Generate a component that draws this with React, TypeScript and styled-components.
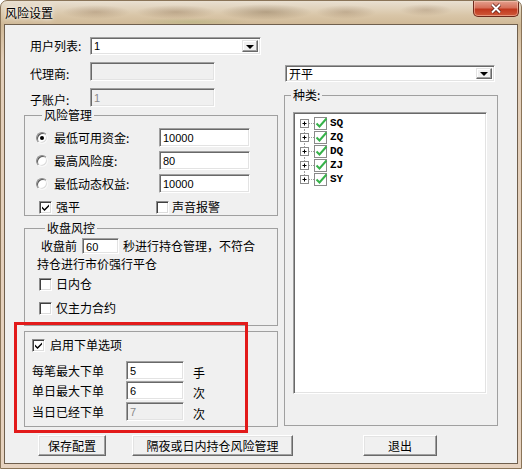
import React from 'react';
import styled, { createGlobalStyle } from 'styled-components';

const GlobalStyle = createGlobalStyle`
  html, body {
    margin: 0;
    padding: 0;
    background: #fff;
  }
  body {
    font-family: "Noto Sans CJK SC", "Liberation Sans", sans-serif;
    font-size: 12px;
    color: #000;
  }
`;

// window frame
const Window = styled.div`
  width: 522px;
  height: 469px;
  box-sizing: border-box;
  border: 1px solid #8a7458;
  border-radius: 7px 7px 0 0;
  padding: 0 3px 4px;
  display: flex;
  flex-direction: column;
  overflow: hidden;
  background:
    radial-gradient(ellipse 34px 7px at 95px 11px, rgba(140, 110, 80, 0.35), transparent),
    radial-gradient(ellipse 40px 7px at 175px 11px, rgba(130, 100, 70, 0.35), transparent),
    radial-gradient(ellipse 46px 8px at 265px 11px, rgba(120, 95, 65, 0.4), transparent),
    radial-gradient(ellipse 30px 7px at 345px 11px, rgba(130, 100, 70, 0.3), transparent),
    radial-gradient(ellipse 26px 6px at 425px 9px, rgba(140, 110, 80, 0.3), transparent),
    radial-gradient(ellipse 60px 4px at 190px 21px, rgba(140, 170, 90, 0.25), transparent),
    linear-gradient(180deg, #e9e0d2 0px, #d9c6a8 14px, #cfb896 24px, #e3cfba 60px, #e6d2bf 100%);
`;

const TitleBar = styled.div`
  height: 23px;
  display: flex;
  align-items: center;
`;

const Title = styled.span`
  font-size: 12px;
  line-height: 14px;
  margin-left: 1px;
  text-shadow: 0 0 6px rgba(255, 255, 255, 0.9), 0 0 3px rgba(255, 255, 255, 0.9);
`;

const CloseButton = styled.div`
  margin-left: auto;
  margin-right: -1px;
  align-self: flex-start;
  width: 46px;
  height: 16px;
  box-sizing: border-box;
  border: 1px solid #6e2a1c;
  border-top: none;
  border-radius: 0 0 5px 5px;
  background: linear-gradient(180deg, #e3a08e 0%, #d6705a 45%, #c0381e 55%, #cf5a3b 100%);
  box-shadow: inset 0 0 0 1px rgba(255, 210, 190, 0.5);
  display: flex;
  align-items: center;
  justify-content: center;
`;

const Client = styled.div`
  flex: 1;
  box-sizing: border-box;
  border: 1px solid #6f5f4d;
  background: #f0f0f0;
  padding: 12px 0 0 19px;
  display: flex;
  flex-direction: column;
`;

const Columns = styled.div`
  display: grid;
  grid-template-columns: 254px 214px;
  column-gap: 6px;
  align-items: start;
`;

const Column = styled.div`
  display: flex;
  flex-direction: column;
`;

// generic row
const Row = styled.div<{ $h: number; $mt?: number; $ml?: number }>`
  display: flex;
  align-items: center;
  height: ${(p) => p.$h}px;
  margin-top: ${(p) => p.$mt ?? 0}px;
  margin-left: ${(p) => p.$ml ?? 0}px;
  white-space: nowrap;
`;

const Text = styled.span<{ $w?: number; $ml?: number; $pt?: number }>`
  display: inline-block;
  ${(p) => (p.$w ? `width: ${p.$w}px;` : '')}
  margin-left: ${(p) => p.$ml ?? 0}px;
  padding-top: ${(p) => p.$pt ?? 0}px;
  line-height: 14px;
  flex-shrink: 0;
`;

const sunken = `
  box-sizing: border-box;
  border: 1px solid;
  border-color: #a0a0a0 #ffffff #ffffff #a0a0a0;
  box-shadow: inset 1px 1px 0 #696969, inset -1px -1px 0 #e3e3e3;
`;

const TextBox = styled.input<{ $w: number; $h: number; $ml?: number }>`
  ${sunken}
  width: ${(p) => p.$w}px;
  height: ${(p) => p.$h}px;
  margin: 0 0 0 ${(p) => p.$ml ?? 0}px;
  padding: 1px 0 0 3px;
  font-family: "Liberation Sans", "DejaVu Sans", sans-serif;
  font-size: 11px;
  color: #000;
  background: #fff;
  outline: none;
  flex-shrink: 0;
  &:disabled {
    background: #f0f0f0;
    color: #8a8a8a;
  }
`;

const Combo = styled.div<{ $w: number; $h: number }>`
  ${sunken}
  width: ${(p) => p.$w}px;
  height: ${(p) => p.$h}px;
  background: #fff;
  display: flex;
  align-items: center;
  padding: 2px 2px 2px 3px;
  flex-shrink: 0;
`;

const ComboValue = styled.span<{ $latin?: boolean }>`
  flex: 1;
  font-family: ${(p) =>
    p.$latin ? '"Liberation Sans", sans-serif' : '"Noto Sans CJK SC", sans-serif'};
  font-size: ${(p) => (p.$latin ? 11 : 12)}px;
  line-height: 14px;
`;

const DropButton = styled.span`
  box-sizing: border-box;
  width: 16px;
  height: 100%;
  background: #f0f0f0;
  border: 1px solid;
  border-color: #e3e3e3 #696969 #696969 #e3e3e3;
  box-shadow: inset -1px -1px 0 #a0a0a0, inset 1px 1px 0 #fff;
  display: flex;
  align-items: center;
  justify-content: center;
  &::after {
    content: '';
    border-left: 4px solid transparent;
    border-right: 4px solid transparent;
    border-top: 4px solid #000;
    margin-top: 1px;
  }
`;

// group boxes
const GroupWrap = styled.div<{ $mt: number }>`
  position: relative;
  margin-top: ${(p) => p.$mt}px;
`;

const GroupBox = styled.fieldset<{ $h: number; $mt?: number; $pl?: number; $pt?: number }>`
  box-sizing: border-box;
  height: ${(p) => p.$h}px;
  margin: ${(p) => p.$mt ?? 0}px 0 0;
  padding: ${(p) => p.$pt ?? 0}px 0 0 ${(p) => p.$pl ?? 0}px;
  border: 1px solid #a0a0a0;
  min-width: 0;
  display: flex;
  flex-direction: column;
`;

const Legend = styled.legend<{ $lh?: number }>`
  margin-left: 6px;
  padding: 0 2px;
  line-height: ${(p) => p.$lh ?? 14}px;
  font-size: 12px;
`;

const Highlight = styled.div`
  position: absolute;
  left: -10px;
  top: -9px;
  width: 234px;
  height: 111px;
  box-sizing: border-box;
  border: 3px solid #e21a1a;
  pointer-events: none;
`;

// radio + checkbox
const Radio = styled.span<{ $checked?: boolean }>`
  position: relative;
  box-sizing: border-box;
  width: 12px;
  height: 12px;
  border-radius: 50%;
  border: 1px solid;
  border-color: #8c8c8c #f8f8f8 #f8f8f8 #8c8c8c;
  background: #fff;
  box-shadow: inset 1px 1px 0 #5a5a5a, inset -1px -1px 0 #dcdcdc;
  flex-shrink: 0;
  &::after {
    content: '';
    display: ${(p) => (p.$checked ? 'block' : 'none')};
    position: absolute;
    left: 3px;
    top: 3px;
    width: 4px;
    height: 4px;
    border-radius: 50%;
    background: #000;
  }
`;

const CheckBox = styled.span`
  box-sizing: border-box;
  width: 13px;
  height: 13px;
  border: 1px solid;
  border-color: #8c8c8c #ffffff #ffffff #8c8c8c;
  box-shadow: inset 1px 1px 0 #404040, inset -1px -1px 0 #dcdcdc;
  background: #fff;
  display: flex;
  align-items: center;
  justify-content: center;
  flex-shrink: 0;
`;

const Check = ({ checked }: { checked?: boolean }) => (
  <CheckBox>
    {checked && (
      <svg width="7" height="7" viewBox="0 0 7 7">
        <path d="M0 2.5 L2.5 5 L7 0.5 V2.5 L2.5 7 L0 4.5 Z" fill="#000" />
      </svg>
    )}
  </CheckBox>
);

// tree
const TreeBox = styled.div`
  box-sizing: border-box;
  width: 194px;
  height: 282px;
  margin: 10px 0 0 8px;
  border: 1px solid;
  border-color: #a0a0a0 #ffffff #ffffff #a0a0a0;
  box-shadow: inset 1px 1px 0 #696969, inset -1px -1px 0 #e3e3e3;
  background: #fff;
  padding: 3px 0 0 2px;
`;

const TreeRow = styled.div`
  display: flex;
  align-items: center;
  height: 14px;
`;

const TreeLabel = styled.span`
  margin-left: 2px;
  font-family: "Liberation Mono", "DejaVu Sans Mono", monospace;
  font-size: 11px;
  font-weight: bold;
  line-height: 14px;
`;

const TreeGlyph = ({ first, last }: { first: boolean; last: boolean }) => (
  <svg width="32" height="14" viewBox="0 0 32 14">
    {!first && <line x1="8.5" y1="0" x2="8.5" y2="3" stroke="#a0a0a0" strokeDasharray="1 1" />}
    {!last && <line x1="8.5" y1="11" x2="8.5" y2="14" stroke="#a0a0a0" strokeDasharray="1 1" />}
    <line x1="13" y1="7.5" x2="18" y2="7.5" stroke="#a0a0a0" strokeDasharray="1 1" />
    <rect x="4.5" y="3.5" width="8" height="8" fill="#fff" stroke="#8a8a8a" />
    <line x1="6.5" y1="7.5" x2="10.5" y2="7.5" stroke="#000" />
    <line x1="8.5" y1="5.5" x2="8.5" y2="9.5" stroke="#000" />
    <rect x="18.5" y="1.5" width="12" height="12" fill="#fff" stroke="#8a8a8a" />
    <path d="M20.5 7.5 L23.5 10.5 L30.5 2.5" fill="none" stroke="#37b24a" strokeWidth="2" />
  </svg>
);

// bottom buttons
const ButtonBar = styled.div`
  display: flex;
  margin-top: 8px;
`;

const Button = styled.div<{ $w: number; $ml: number }>`
  box-sizing: border-box;
  width: ${(p) => p.$w}px;
  height: 21px;
  margin-left: ${(p) => p.$ml}px;
  background: #f0f0f0;
  border: 1px solid;
  border-color: #ffffff #696969 #696969 #ffffff;
  box-shadow: inset -1px -1px 0 #a0a0a0, inset 1px 1px 0 #e3e3e3;
  display: flex;
  align-items: center;
  justify-content: center;
  line-height: 14px;
`;

const products = ['SQ', 'ZQ', 'DQ', 'ZJ', 'SY'];

const riskRows = [
  { label: '最低可用资金:', value: '10000', checked: true, mt: 6 },
  { label: '最高风险度:', value: '80', checked: false, mt: 4 },
  { label: '最低动态权益:', value: '10000', checked: false, mt: 4 },
];

const orderRows = [
  { label: '每笔最大下单', value: '5', unit: '手', mt: 9, disabled: false },
  { label: '单日最大下单', value: '6', unit: '次', mt: 1, disabled: false },
  { label: '当日已经下单', value: '7', unit: '次', mt: 2, disabled: true },
];

const App = (): JSX.Element => (
  <>
    <GlobalStyle />
    <Window>
      <TitleBar>
        <Title>风险设置</Title>
        <CloseButton>
          <svg width="14" height="11" viewBox="0 0 14 11">
            <path d="M3 1.5 L11 9.5 M11 1.5 L3 9.5" stroke="#5a1a10" strokeWidth="3.4" />
            <path d="M3 1.5 L11 9.5 M11 1.5 L3 9.5" stroke="#fff" strokeWidth="2" />
          </svg>
        </CloseButton>
      </TitleBar>
      <Client>
        <Columns>
          <Column>
            <Row $h={18}>
              <Text $w={60} $ml={6}>用户列表:</Text>
              <Combo $w={171} $h={18}>
                <ComboValue $latin>1</ComboValue>
                <DropButton />
              </Combo>
            </Row>
            <Row $h={19} $mt={7}>
              <Text $w={60} $ml={6} $pt={5}>代理商:</Text>
              <TextBox $w={125} $h={19} disabled defaultValue="" />
            </Row>
            <Row $h={19} $mt={7}>
              <Text $w={60} $ml={6} $pt={5}>子账户:</Text>
              <TextBox $w={125} $h={19} disabled defaultValue="1" />
            </Row>

            <GroupBox $h={108} $mt={1} $pl={11}>
              <Legend>风险管理</Legend>
              {riskRows.map((r) => (
                <Row key={r.label} $h={19} $mt={r.mt}>
                  <Radio $checked={r.checked} />
                  <Text $w={105} $ml={6}>{r.label}</Text>
                  <TextBox $w={91} $h={19} readOnly defaultValue={r.value} />
                </Row>
              ))}
              <Row $h={14} $mt={7} $ml={3}>
                <Check checked />
                <Text $w={100} $ml={4}>强平</Text>
                <Check />
                <Text $ml={3}>声音报警</Text>
              </Row>
            </GroupBox>

            <GroupBox $h={104} $mt={6} $pl={14}>
              <Legend $lh={12}>收盘风控</Legend>
              <Row $h={16} $mt={4} $ml={2}>
                <Text>收盘前</Text>
                <TextBox $w={37} $h={16} $ml={5} readOnly defaultValue="60" />
                <Text $ml={4}>秒进行持仓管理，不符合</Text>
              </Row>
              <Row $h={14} $mt={3} $ml={-2}>
                <Text>持仓进行市价强行平仓</Text>
              </Row>
              <Row $h={14} $mt={6}>
                <Check />
                <Text $ml={4}>日内仓</Text>
              </Row>
              <Row $h={14} $mt={10}>
                <Check />
                <Text $ml={4}>仅主力合约</Text>
              </Row>
            </GroupBox>

            <GroupWrap $mt={5}>
              <GroupBox $h={96} $pl={7} $pt={6}>
                <Row $h={14}>
                  <Check checked />
                  <Text $ml={5}>启用下单选项</Text>
                </Row>
                {orderRows.map((r) => (
                  <Row key={r.label} $h={19} $mt={r.mt}>
                    <Text $w={94}>{r.label}</Text>
                    <TextBox $w={58} $h={19} disabled={r.disabled} readOnly defaultValue={r.value} />
                    <Text $ml={9} $pt={4}>{r.unit}</Text>
                  </Row>
                ))}
              </GroupBox>
              <Highlight />
            </GroupWrap>
          </Column>

          <Column>
            <Row $h={17} $mt={28} $ml={1}>
              <Combo $w={210} $h={17}>
                <ComboValue>开平</ComboValue>
                <DropButton />
              </Combo>
            </Row>
            <GroupBox $h={338} $mt={6}>
              <Legend>种类:</Legend>
              <TreeBox>
                {products.map((p, i) => (
                  <TreeRow key={p}>
                    <TreeGlyph first={i === 0} last={i === products.length - 1} />
                    <TreeLabel>{p}</TreeLabel>
                  </TreeRow>
                ))}
              </TreeBox>
            </GroupBox>
          </Column>
        </Columns>

        <ButtonBar>
          <Button $w={68} $ml={14}>保存配置</Button>
          <Button $w={161} $ml={26}>隔夜或日内持仓风险管理</Button>
          <Button $w={74} $ml={70}>退出</Button>
        </ButtonBar>
      </Client>
    </Window>
  </>
);

export default App;
